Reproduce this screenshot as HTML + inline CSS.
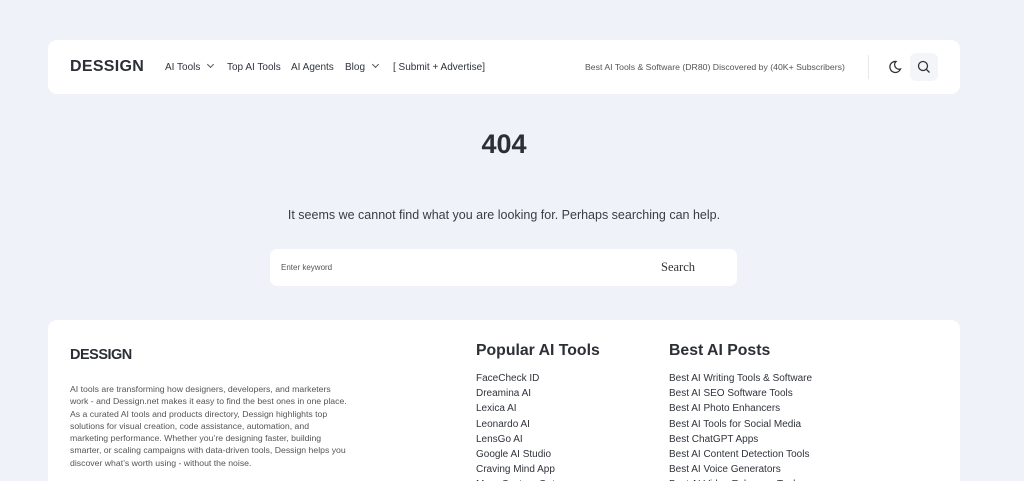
<!DOCTYPE html>
<html><head><style>
*{margin:0;padding:0;box-sizing:border-box}
html,body{width:1024px;height:481px;overflow:hidden}
body{background:#eff2f8;font-family:"Liberation Sans",sans-serif;color:#333;position:relative}
.card{position:absolute;background:#fff;border-radius:9px}
.hdr{left:48px;top:40px;width:912px;height:54px}
.abs{position:absolute;white-space:nowrap}
.logo{font-weight:bold;letter-spacing:0.3px;color:#2c2f36}
.nav{font-size:10px;color:#2f333b;top:22px}
.chev{display:inline-block;width:5px;height:5px;border-right:1.2px solid #555;border-bottom:1.2px solid #555;transform:rotate(45deg);margin-left:8px;position:relative;top:-3px}
.ft{left:48px;top:320px;width:912px;height:161px;border-radius:9px 9px 0 0}
.list div{font-size:10px;color:#2f333b;height:15.2px;line-height:15px}
</style></head><body>
<div class="card hdr">
  <div class="abs logo" style="left:22px;top:18px;font-size:16px">DESSIGN</div>
  <div class="abs nav" style="left:117px">AI Tools<span class="chev"></span></div>
  <div class="abs nav" style="left:179px">Top AI Tools</div>
  <div class="abs nav" style="left:243px">AI Agents</div>
  <div class="abs nav" style="left:297px">Blog<span class="chev"></span></div>
  <div class="abs nav" style="left:345px">[ Submit + Advertise]</div>
  <div class="abs" style="left:537px;top:22px;font-size:8.7px;color:#555">Best AI Tools &amp; Software (DR80) Discovered by (40K+ Subscribers)</div>
  <div class="abs" style="left:820px;top:15px;width:1px;height:24px;background:#e8e8e8"></div>
  <svg class="abs" style="left:840px;top:20px" width="14" height="14" viewBox="0 0 14 14"><path d="M8 1.5A5.5 5.5 0 1 0 12.5 9 4.5 4.5 0 0 1 8 1.5z" fill="none" stroke="#333" stroke-width="1.3"/></svg>
  <div class="abs" style="left:862px;top:13px;width:28px;height:28px;background:#f4f5f8;border-radius:6px"></div>
  <svg class="abs" style="left:869px;top:20px" width="14" height="14" viewBox="0 0 14 14"><circle cx="6" cy="6" r="4.5" fill="none" stroke="#333" stroke-width="1.3"/><path d="M9.5 9.5L12.5 12.5" stroke="#333" stroke-width="1.3"/></svg>
</div>
<div class="abs" style="left:0;width:1008px;text-align:center;top:129px;font-size:27px;font-weight:bold;color:#2c2f36">404</div>
<div class="abs" style="left:0;width:1008px;text-align:center;top:208px;font-size:12.5px;color:#3a3d44">It seems we cannot find what you are looking for. Perhaps searching can help.</div>
<div class="card" style="left:270px;top:249px;width:467px;height:37px;border-radius:7px">
  <div class="abs" style="left:11px;top:14px;font-size:8px;color:#555">Enter keyword</div>
  <div class="abs" style="left:391px;top:11px;font-size:12.5px;font-family:'Liberation Serif',serif;color:#333">Search</div>
</div>
<div class="card ft">
  <div class="abs logo" style="left:22px;top:27px;font-size:14.5px;letter-spacing:-0.5px">DESSIGN</div>
  <div class="abs" style="left:22px;top:63px;width:278px;white-space:normal;font-size:8.7px;line-height:12.3px;color:#555">AI tools are transforming how designers, developers, and marketers work - and Dessign.net makes it easy to find the best ones in one place. As a curated AI tools and products directory, Dessign highlights top solutions for visual creation, code assistance, automation, and marketing performance. Whether you’re designing faster, building smarter, or scaling campaigns with data-driven tools, Dessign helps you discover what’s worth using - without the noise.</div>
  <div class="abs" style="left:428px;top:22px;font-size:15.8px;font-weight:bold;color:#2c2f36">Popular AI Tools</div>
  <div class="abs list" style="left:428px;top:51px">
    <div>FaceCheck ID</div><div>Dreamina AI</div><div>Lexica AI</div><div>Leonardo AI</div><div>LensGo AI</div><div>Google AI Studio</div><div>Craving Mind App</div><div>More Custom Gpt</div>
  </div>
  <div class="abs" style="left:621px;top:22px;font-size:15.8px;font-weight:bold;color:#2c2f36">Best AI Posts</div>
  <div class="abs list" style="left:621px;top:51px">
    <div>Best AI Writing Tools &amp; Software</div><div>Best AI SEO Software Tools</div><div>Best AI Photo Enhancers</div><div>Best AI Tools for Social Media</div><div>Best ChatGPT Apps</div><div>Best AI Content Detection Tools</div><div>Best AI Voice Generators</div><div>Best AI Video Enhancer Tools</div>
  </div>
</div>
</body></html>
